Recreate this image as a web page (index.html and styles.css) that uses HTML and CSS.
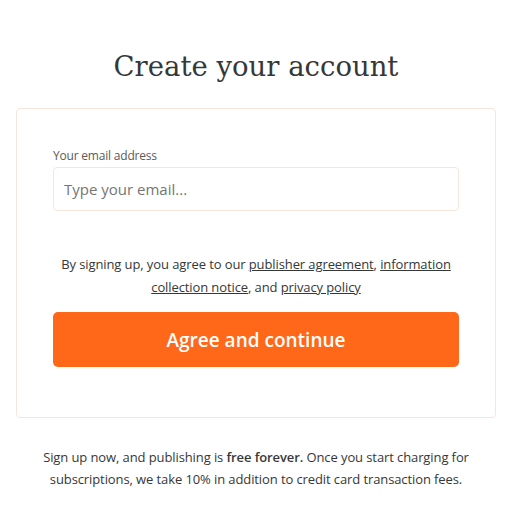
FILE: index.html
```html
<!DOCTYPE html>
<html>
<head>
<meta charset="utf-8">
<link rel="stylesheet" href="styles.css">
</head>
<body>
<div class="page">
  <h1 class="title">Create your account</h1>
  <div class="card">
    <label class="label" for="email">Your email address</label>
    <input class="input" id="email" type="email" placeholder="Type your email...">
    <p class="terms">By signing up, you agree to our <a href="#">publisher agreement</a>, <a href="#">information collection notice</a>, and <a href="#">privacy policy</a></p>
    <button class="btn">Agree and continue</button>
  </div>
  <p class="footer">Sign up now, and publishing is <strong>free forever.</strong> Once you start charging for subscriptions, we take 10% in addition to credit card transaction fees.</p>
</div>
</body>
</html>
```
FILE: styles.css
```css
* { box-sizing: border-box; }
body {
  margin: 0;
  background: #fff;
  font-family: "Open Sans", "Noto Sans", sans-serif;
  color: #363737;
}
.page {
  padding: 44px 13px 0 16px;
  display: flex;
  flex-direction: column;
}
.title {
  margin: 0 0 20px;
  text-align: center;
  font-family: "DejaVu Serif", serif;
  font-weight: 400;
  font-size: 27.5px;
  line-height: 44px;
  color: #363737;
}
.card {
  border: 1px solid #f5e6dc;
  border-radius: 4px;
  padding: 38px 36px 50px;
  display: flex;
  flex-direction: column;
}
.label {
  font-size: 12px;
  letter-spacing: -0.2px;
  line-height: 18px;
  color: #5a5a5a;
  margin-bottom: 2px;
}
.input {
  height: 44px;
  border: 1px solid #f5e6dc;
  border-radius: 4px;
  padding: 0 10px;
  font-family: inherit;
  font-size: 15px;
  color: #363737;
}
.input::placeholder { color: #757575; }
.terms {
  margin: 42px 0 13px;
  text-align: center;
  font-size: 13px;
  letter-spacing: -0.1px;
  line-height: 23px;
  color: #363737;
}
.terms a { color: #363737; text-decoration: underline; }
.btn {
  height: 55px;
  border: 0;
  border-radius: 5px;
  background: #ff6719;
  color: #fff;
  font-family: inherit;
  font-size: 19px;
  font-weight: 600;
}
.footer {
  margin: 28px 0 0;
  text-align: center;
  font-size: 13px;
  letter-spacing: -0.1px;
  line-height: 22px;
  color: #363737;
  padding: 0 20px;
}
.footer strong { font-weight: 600; }
```
